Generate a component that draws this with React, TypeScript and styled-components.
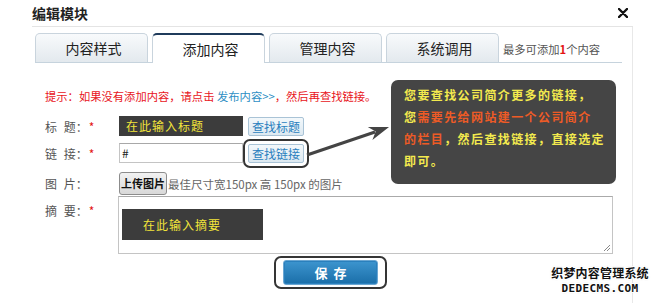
import React from "react";
import styled, { createGlobalStyle, css } from "styled-components";

const Global = createGlobalStyle`
  html, body { margin: 0; padding: 0; background: #fff; }
  body { font-family: "Noto Sans CJK SC", "Noto Sans", sans-serif; }
  * { box-sizing: border-box; }
`;

const Root = styled.div`
  position: relative;
  width: 660px;
  height: 303px;
  overflow: hidden;
  background: #fff;
`;

const Dialog = styled.div`
  margin-left: 32px;
  width: 601px;
  height: 303px;
  display: flex;
  flex-direction: column;
`;

const Header = styled.div`
  height: 27px;
  border-bottom: 1px solid #e4e4e4;
  display: flex;
  align-items: center;
  justify-content: space-between;
  padding-right: 5px;
`;

const Title = styled.div`
  font-size: 14px;
  font-weight: bold;
  color: #222;
  line-height: 26px;
  margin-top: -1px;
`;

const Close = styled.svg`
  width: 10px;
  height: 10px;
  margin-top: 0px;
`;

const Body = styled.div`
  flex: 1;
  border-right: 1px solid #e8e8e8;
  padding: 6px 0 0 3px;
`;

const TabBar = styled.div`
  display: flex;
  align-items: flex-end;
  gap: 4px;
  width: 587px;
  height: 30px;
  border-bottom: 1px solid #c6d3dd;
`;

const Tab = styled.div<{ $active?: boolean }>`
  width: 113px;
  height: 29px;
  border: 1px solid #c9d4dd;
  border-bottom: none;
  border-radius: 5px 5px 0 0;
  background: linear-gradient(#f8fafc, #e3e9ee);
  font-size: 14px;
  color: #222;
  display: flex;
  align-items: center;
  justify-content: center;
  padding-left: 4px;
  ${(p) =>
    p.$active &&
    css`
      background: #fff;
      border-top: 2px solid #1f3b5b;
      height: 30px;
      margin-bottom: -1px;
    `}
`;

const Limit = styled.div`
  align-self: center;
  font-size: 11.3px;
  color: #555;
  line-height: 16px;
  margin-top: 2px;
`;

const Red = styled.span`
  color: #e31414;
  font-weight: bold;
`;

const Content = styled.div`
  padding-left: 10px;
`;

const Hint = styled.div`
  margin-top: 25px;
  font-size: 11.3px;
  line-height: 16px;
  color: #e8141a;
`;

const HintLink = styled.span`
  color: #2e8fc4;
`;

const Row = styled.div<{ $top: number; $h: number; $align?: string }>`
  display: flex;
  align-items: ${(p) => p.$align || "center"};
  margin-top: ${(p) => p.$top}px;
  height: ${(p) => p.$h}px;
`;

const Label = styled.div<{ $pt?: number }>`
  width: 74px;
  font-size: 12px;
  color: #555;
  word-spacing: 4px;
  padding-top: ${(p) => p.$pt || 0}px;
  white-space: nowrap;
`;

const Star = styled.span`
  color: #e31414;
  margin-left: 1px;
`;

const DarkField = styled.div`
  width: 124px;
  height: 20px;
  background: #3c3c3c;
  color: #f2e53a;
  font-size: 12px;
  letter-spacing: 1px;
  line-height: 20px;
  padding-left: 7px;
`;

const TextField = styled.div`
  width: 124px;
  height: 20px;
  border: 1px solid #c4c4c4;
  border-top-color: #a8a8a8;
  font-size: 12px;
  line-height: 18px;
  padding-left: 2px;
  color: #222;
`;

const FindButton = styled.div`
  width: 56px;
  height: 19px;
  border: 1px solid #a9c3d6;
  border-radius: 2px;
  background: linear-gradient(#f3f8fb, #dde9f1);
  color: #2a7fbe;
  font-size: 12px;
  line-height: 17px;
  text-align: center;
`;

const Gap = styled.div<{ $w: number }>`
  width: ${(p) => p.$w}px;
`;

const Outline = styled.div<{ $px: number; $py: number }>`
  border: 2px solid #353535;
  border-radius: 7px;
  padding: ${(p) => `${p.$py}px ${p.$px}px`};
  margin: -${(p) => p.$py + 2}px 0;
  background: #fff;
`;

const UploadButton = styled.div`
  width: 48px;
  height: 23px;
  border: 1px solid #8c8c8c;
  border-radius: 3px;
  background: linear-gradient(#f2f2f2, #d8d8d8);
  font-size: 11px;
  font-weight: bold;
  color: #111;
  line-height: 21px;
  text-align: center;
  white-space: nowrap;
  overflow: hidden;
`;

const Note = styled.div`
  font-size: 11.5px;
  color: #666;
  margin-left: 1px;
`;

const TextArea = styled.div`
  position: relative;
  width: 495px;
  height: 58px;
  margin-left: -1px;
  border: 1px solid #c4c4c4;
  border-top-color: #aaa;
  padding: 12px 0 0 3px;
`;

const DarkBox = styled.div`
  width: 141px;
  height: 31px;
  background: #3c3c3c;
  color: #f2e53a;
  font-size: 12px;
  letter-spacing: 1px;
  line-height: 31px;
  padding-left: 21px;
`;

const Grip = styled.svg`
  position: absolute;
  right: 1px;
  bottom: 1px;
  width: 9px;
  height: 9px;
`;

const SaveWrap = styled.div`
  margin-top: 6px;
  padding-left: 229px;
  display: flex;
`;

const SaveButton = styled.div`
  width: 95px;
  height: 25px;
  border: 1px solid #6aa6d2;
  border-radius: 3px;
  background: linear-gradient(#3d95cf, #1a6ea8);
  box-shadow: inset 0 0 0 1px #2a80bd;
  color: #fff;
  font-size: 13px;
  font-weight: bold;
  letter-spacing: 6px;
  text-indent: 6px;
  line-height: 23px;
  text-align: center;
`;

const Tip = styled.div`
  position: absolute;
  left: 391px;
  top: 80px;
  width: 225px;
  height: 104px;
  background: #454545;
  border-radius: 7px;
  padding: 4px 6px 0 13px;
  font-size: 12px;
  font-weight: bold;
  letter-spacing: 1.4px;
  line-height: 22px;
  white-space: nowrap;
`;

const Y = styled.span`
  color: #f3ea4e;
`;

const O = styled.span`
  color: #ee5b26;
`;

const Arrow = styled.svg`
  position: absolute;
  left: 300px;
  top: 120px;
  width: 95px;
  height: 40px;
`;

const Mark = styled.div`
  position: absolute;
  left: 550px;
  top: 266px;
  width: 100px;
  text-align: center;
  font-weight: bold;
  color: #111;
  line-height: 14px;
  text-shadow: 1px 0 0 #fff, -1px 0 0 #fff, 0 1px 0 #fff, 0 -1px 0 #fff,
    1px 1px 0 #fff, -1px -1px 0 #fff, 1px -1px 0 #fff, -1px 1px 0 #fff,
    0 0 2px #999;
`;

const MarkCn = styled.div`
  font-size: 12px;
  letter-spacing: 0.2px;
`;

const MarkEn = styled.div`
  font-family: "DejaVu Sans Mono", monospace;
  font-size: 11px;
  letter-spacing: 0.4px;
  margin-top: 2px;
`;

export default function App() {
  return (
    <Root>
      <Global />
      <Dialog>
        <Header>
          <Title>编辑模块</Title>
          <Close viewBox="0 0 10 10">
            <path d="M1 1 L9 9 M9 1 L1 9" stroke="#111" strokeWidth="2.4" strokeLinecap="round" />
          </Close>
        </Header>
        <Body>
          <TabBar>
            <Tab>内容样式</Tab>
            <Tab $active>添加内容</Tab>
            <Tab>管理内容</Tab>
            <Tab>系统调用</Tab>
            <Limit>
              最多可添加<Red>1</Red>个内容
            </Limit>
          </TabBar>
          <Content>
            <Hint>
              提示：如果没有添加内容，请点击 <HintLink>发布内容&gt;&gt;</HintLink>，然后再查找链接。
            </Hint>
            <Row $top={12} $h={20}>
              <Label>
                标 题：<Star>*</Star>
              </Label>
              <DarkField>在此输入标题</DarkField>
              <Gap $w={5} />
              <FindButton>查找标题</FindButton>
            </Row>
            <Row $top={7} $h={20}>
              <Label>
                链 接：<Star>*</Star>
              </Label>
              <TextField>#</TextField>
              <Outline $px={3} $py={3}>
                <FindButton>查找链接</FindButton>
              </Outline>
            </Row>
            <Row $top={9} $h={23}>
              <Label>图 片：</Label>
              <UploadButton>上传图片</UploadButton>
              <Note>最佳尺寸宽150px 高 150px 的图片</Note>
            </Row>
            <Row $top={1} $h={58} $align="flex-start">
              <Label $pt={6}>
                摘 要：<Star>*</Star>
              </Label>
              <TextArea>
                <DarkBox>在此输入摘要</DarkBox>
                <Grip viewBox="0 0 9 9">
                  <path d="M8 2 L2 8 M8 5 L5 8" stroke="#888" strokeWidth="1" />
                </Grip>
              </TextArea>
            </Row>
            <SaveWrap>
              <Outline $px={7} $py={2}>
                <SaveButton>保存</SaveButton>
              </Outline>
            </SaveWrap>
          </Content>
        </Body>
      </Dialog>
      <Arrow viewBox="0 0 95 40">
        <line x1="7" y1="35" x2="75" y2="12" stroke="#444" strokeWidth="3" />
        <polygon points="89,7 67.8,6.9 75.7,11.5 72.4,20.1" fill="#444" />
      </Arrow>
      <Tip>
        <div>
          <Y>您要查找公司简介更多的链接，</Y>
        </div>
        <div>
          <Y>您</Y>
          <O>需要先给网站建一个公司简介</O>
        </div>
        <div>
          <O>的栏目</O>
          <Y>，然后查找链接，直接选定</Y>
        </div>
        <div>
          <Y>即可。</Y>
        </div>
      </Tip>
      <Mark>
        <MarkCn>织梦内容管理系统</MarkCn>
        <MarkEn>DEDECMS.COM</MarkEn>
      </Mark>
    </Root>
  );
}
